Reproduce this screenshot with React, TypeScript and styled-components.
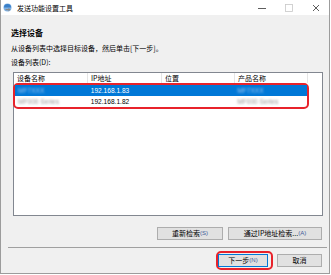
import React from 'react';
import styled, { createGlobalStyle } from 'styled-components';

const GlobalStyle = createGlobalStyle`
  html, body {
    margin: 0;
    padding: 0;
    background: #ffffff;
  }
  body {
    font-family: "Noto Sans CJK SC", "Liberation Sans", sans-serif;
    font-size: 7px;
    color: #000;
  }
`;

const Window = styled.div`
  width: 330px;
  height: 274px;
  box-sizing: border-box;
  border: 1px solid #9c9c9c;
  border-top: none;
  background: #f0f0f0;
  display: flex;
  flex-direction: column;
`;

const TitleBar = styled.div`
  height: 15px;
  background: #ffffff;
  display: flex;
  align-items: center;
  padding-left: 2px;
`;

const TitleText = styled.div`
  margin-left: 5px;
  font-size: 7px;
  line-height: 10px;
  flex: 1;
`;

const WinControl = styled.div`
  width: 27px;
  height: 15px;
  display: flex;
  align-items: center;
  justify-content: center;
`;

const Body = styled.div`
  flex: 1;
  display: flex;
  flex-direction: column;
  padding: 13px 6px 0 10px;
`;

const Heading = styled.div`
  font-size: 8px;
  font-weight: bold;
  line-height: 10px;
`;

const Text = styled.div<{ $top: number }>`
  margin-top: ${(p) => p.$top}px;
  font-size: 7px;
  line-height: 10px;
`;

const ListBox = styled.div`
  margin: 5px 0 0 2px;
  height: 144px;
  box-sizing: border-box;
  border: 1px solid #828790;
  background: #ffffff;
  display: flex;
  flex-direction: column;
`;

const HeaderRow = styled.div`
  display: flex;
  height: 10px;
`;

const HeaderCell = styled.div<{ $w: number }>`
  width: ${(p) => p.$w}px;
  box-sizing: border-box;
  padding-left: 3px;
  border-right: 1px solid #e5e5e5;
  line-height: 10px;
  font-size: 7px;
`;

const Highlight = styled.div`
  margin: 0 0 0 -1px;
  width: 296px;
  box-sizing: border-box;
  border: 2px solid #e8232b;
  border-radius: 5px;
`;

const Row = styled.div<{ $selected?: boolean }>`
  display: flex;
  height: 11px;
  align-items: center;
  background: ${(p) => (p.$selected ? '#0078d7' : 'transparent')};
  color: ${(p) => (p.$selected ? '#ffffff' : '#000000')};
`;

const Cell = styled.div<{ $w: number }>`
  width: ${(p) => p.$w}px;
  box-sizing: border-box;
  padding-left: 3px;
  font-family: "Liberation Sans", "Noto Sans CJK SC", sans-serif;
  font-size: 6.6px;
  line-height: 11px;
  white-space: nowrap;
`;

const Blur = styled.span<{ $color: string }>`
  display: inline-block;
  filter: blur(1.3px);
  color: ${(p) => p.$color};
  font-size: 6.6px;
`;

const ButtonRow = styled.div<{ $top: number }>`
  display: flex;
  justify-content: flex-end;
  align-items: center;
  gap: 5px;
  margin-top: ${(p) => p.$top}px;
  padding-right: 1px;
`;

const Button = styled.div<{ $w: number; $primary?: boolean }>`
  width: ${(p) => p.$w}px;
  height: 13px;
  box-sizing: border-box;
  background: #e1e1e1;
  border: 1px solid ${(p) => (p.$primary ? '#0078d7' : '#adadad')};
  display: flex;
  align-items: center;
  justify-content: center;
  font-size: 7px;
  line-height: 11px;
`;

const Key = styled.span`
  color: #3d5a99;
  font-family: "Liberation Sans", sans-serif;
  font-size: 6px;
`;

const Separator = styled.div`
  margin: 7px -4px 0 -3px;
  height: 1px;
  background: #a0a0a0;
`;

const FooterRow = styled.div`
  display: flex;
  justify-content: flex-end;
  align-items: center;
  gap: 4px;
  margin-top: 3px;
  padding-right: 1px;
`;

const Outline = styled.div`
  border: 2px solid #e8232b;
  border-radius: 5px;
  padding: 1px 3px 1px 0;
`;

const cols = [74, 74, 73, 73];

function AppIcon() {
  return (
    <svg width="9" height="9" viewBox="0 0 9 9">
      <circle cx="4.5" cy="4.5" r="4" fill="#7fb2e5" />
      <path d="M1 4.5 A3.5 3.5 0 0 1 8 4.5" fill="#3a7fc8" />
      <path d="M2.5 6 L5.5 6 L5.5 4.8 L7.5 6.6 L5.5 8.4 L5.5 7.2 L2.5 7.2 Z" fill="#8a8a8a" />
    </svg>
  );
}

export default function App() {
  return (
    <>
      <GlobalStyle />
      <Window>
        <TitleBar>
          <AppIcon />
          <TitleText>发送功能设置工具</TitleText>
          <WinControl>
            <svg width="8" height="8" viewBox="0 0 8 8">
              <line x1="0" y1="4.5" x2="8" y2="4.5" stroke="#333" strokeWidth="0.8" />
            </svg>
          </WinControl>
          <WinControl>
            <svg width="8" height="8" viewBox="0 0 8 8">
              <rect x="0.5" y="0.5" width="7" height="7" fill="none" stroke="#c8c8c8" strokeWidth="0.8" />
            </svg>
          </WinControl>
          <WinControl>
            <svg width="8" height="8" viewBox="0 0 8 8">
              <path d="M1 1 L7 7 M7 1 L1 7" stroke="#333" strokeWidth="0.8" />
            </svg>
          </WinControl>
        </TitleBar>
        <Body>
          <Heading>选择设备</Heading>
          <Text $top={5}>从设备列表中选择目标设备，然后单击[下一步]。</Text>
          <Text $top={4}>设备列表(D):</Text>
          <ListBox>
            <HeaderRow>
              <HeaderCell $w={cols[0]}>设备名称</HeaderCell>
              <HeaderCell $w={cols[1]}>IP地址</HeaderCell>
              <HeaderCell $w={cols[2]}>位置</HeaderCell>
              <HeaderCell $w={cols[3]}>产品名称</HeaderCell>
            </HeaderRow>
            <Highlight>
              <Row $selected>
                <Cell $w={cols[0] - 1}>
                  <Blur $color="#9cc6ef">MF7XXX</Blur>
                </Cell>
                <Cell $w={cols[1]}>192.168.1.83</Cell>
                <Cell $w={cols[2]} />
                <Cell $w={cols[3]}>
                  <Blur $color="#9cc6ef">MF7XXX</Blur>
                </Cell>
              </Row>
              <Row>
                <Cell $w={cols[0] - 1}>
                  <Blur $color="#9a9a9a">MF000 Series</Blur>
                </Cell>
                <Cell $w={cols[1]}>192.168.1.82</Cell>
                <Cell $w={cols[2]} />
                <Cell $w={cols[3]}>
                  <Blur $color="#9a9a9a">MF000 Series</Blur>
                </Cell>
              </Row>
            </Highlight>
          </ListBox>
          <ButtonRow $top={11}>
            <Button $w={66}>
              重新检索<Key>(S)</Key>
            </Button>
            <Button $w={94}>
              通过IP地址检索...<Key>(A)</Key>
            </Button>
          </ButtonRow>
          <Separator />
          <FooterRow>
            <Outline>
              <Button $w={50} $primary>
                下一步<Key>(N)</Key>
              </Button>
            </Outline>
            <Button $w={45}>取消</Button>
          </FooterRow>
        </Body>
      </Window>
    </>
  );
}
